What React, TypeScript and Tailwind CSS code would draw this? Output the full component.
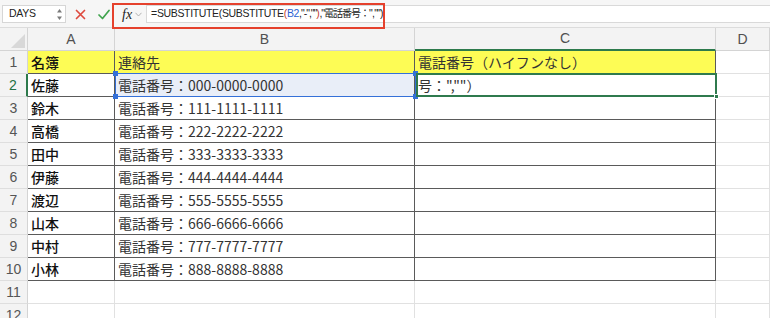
import React from "react";

const names = ["佐藤", "鈴木", "高橋", "田中", "伊藤", "渡辺", "山本", "中村", "小林"];

const jp = { fontFamily: '"Noto Sans CJK JP", "Liberation Sans", sans-serif' };

function Cell({
  w,
  dark,
  className = "",
  children,
}: {
  w: string;
  dark: boolean;
  className?: string;
  children?: React.ReactNode;
}) {
  return (
    <div
      className={`${w} flex h-full shrink-0 items-center overflow-visible whitespace-nowrap border-r border-b px-[3px] text-[14px] ${
        dark ? "border-[#5a5a5a]" : "border-[#e1e1e1]"
      } ${className}`}
    >
      {children}
    </div>
  );
}

function FormulaBar() {
  return (
    <div className="relative flex h-[27px] items-start bg-[#f6f6f6]">
      <div className="ml-[2px] mt-[5px] flex h-[18px] w-[64px] items-center justify-between border border-[#d6d6d6] bg-white pl-[6px] pr-[2px]">
        <span className="text-[10.5px] tracking-[-0.3px] text-[#222]" style={{ fontFamily: '"Liberation Sans", sans-serif' }}>
          DAYS
        </span>
        <svg width="7" height="13" viewBox="0 0 7 13">
          <path d="M3.5 1 L6 4.5 H1 Z" fill="#7a7a7a" />
          <path d="M3.5 12 L6 8.5 H1 Z" fill="#7a7a7a" />
        </svg>
      </div>
      <div className="ml-[9px] mt-[9px]">
        <svg width="11" height="11" viewBox="0 0 11 11">
          <path d="M1.5 1.5 L9.5 9.5 M9.5 1.5 L1.5 9.5" stroke="#de4a3e" strokeWidth="1.7" strokeLinecap="round" />
        </svg>
      </div>
      <div className="ml-[12px] mt-[9px]">
        <svg width="12" height="11" viewBox="0 0 12 11">
          <path d="M1 6 L4.5 9.5 L11 1.5" fill="none" stroke="#3fa34d" strokeWidth="1.7" strokeLinecap="round" strokeLinejoin="round" />
        </svg>
      </div>
      <div className="ml-[8px] mt-[5px] flex h-[18px] items-center">
        <span className="ml-[4px] text-[14px] italic text-[#222]" style={{ fontFamily: '"Liberation Serif", serif' }}>
          fx
        </span>
        <svg className="ml-[3px]" width="7" height="5" viewBox="0 0 7 5">
          <path d="M0.5 0.8 L3.5 4 L6.5 0.8" fill="none" stroke="#aaa" strokeWidth="0.9" />
        </svg>
      </div>
      <div className="ml-[4px] mt-[5px] flex h-[18px] flex-1 items-center border-y border-l border-[#d9d9d9] bg-white pl-[4px]">
        <span
          className="whitespace-nowrap text-[10.5px] tracking-[-0.35px] text-[#222]"
          style={{ fontFamily: '"Liberation Sans", "Noto Sans CJK JP", sans-serif' }}
        >
          =SUBSTITUTE(SUBSTITUTE<span className="text-[#c43a2c]">(</span>
          <span className="text-[#2a62d3]">B2</span>
          <span className="tracking-[-1px]">,"-",""</span>
          <span className="text-[#c43a2c]">)</span>
          <span className="tracking-[-1px]">,"</span>
          <span className="text-[10px] tracking-[-1px]">電話番号：</span>
          <span className="tracking-[-0.8px]">",""</span>
          <span className="border-r border-[#222] pr-[1px]">)</span>
        </span>
      </div>
      <div className="pointer-events-none absolute left-[112px] top-[3px] h-[26px] w-[273px] border-[2.5px] border-[#e5412d]" />
    </div>
  );
}

function ColumnHeader() {
  const base = "flex h-full shrink-0 items-center justify-center border-r border-b border-[#d4d4d4] bg-[#f3f3f3] text-[14px] text-[#505050]";
  return (
    <div className="flex h-[24px] border-t border-[#dcdcdc]" style={{ fontFamily: '"Liberation Sans", sans-serif' }}>
      <div className={`${base} relative w-[28px]`}>
        <svg className="absolute right-[2px] bottom-[2px]" width="14" height="14" viewBox="0 0 14 14">
          <path d="M14 0 L14 14 L0 14 Z" fill="#d8d8d8" />
        </svg>
      </div>
      <div className={`${base} w-[87px]`}>A</div>
      <div className={`${base} w-[300px]`}>B</div>
      <div className={`${base} w-[301px] border-b-2 border-b-[#2d7a4c] text-[#237044]`}>C</div>
      <div className={`${base} flex-1`}>D</div>
    </div>
  );
}

export default function App() {
  const rows = Array.from({ length: 12 }, (_, i) => i + 1);
  return (
    <div className="h-[318px] w-[770px] overflow-hidden bg-white">
      <FormulaBar />
      <ColumnHeader />
      <div className="relative" style={jp}>
        {rows.map((r) => {
          const dark = r <= 10;
          const head = r === 1;
          const yellow = head ? "bg-[#fdfc55]" : "";
          let a = "";
          let b = "";
          if (head) {
            a = "名簿";
            b = "連絡先";
          } else if (r <= 10) {
            a = names[r - 2];
            b = `電話番号：${String(r - 2).repeat(3)}-${String(r - 2).repeat(4)}-${String(r - 2).repeat(4)}`;
          }
          return (
            <div key={r} className="flex h-[23px]">
              <div
                className={`flex h-full w-[28px] shrink-0 items-center justify-center border-b border-[#dedede] bg-[#f3f3f3] text-[14px] ${
                  r === 2 ? "border-r-2 border-r-[#2d7a4c] text-[#237044]" : "border-r border-r-[#d4d4d4] text-[#555]"
                }`}
                style={{ fontFamily: '"Liberation Sans", sans-serif' }}
              >
                {r}
              </div>
              <Cell w="w-[87px]" dark={dark} className={`${yellow} font-medium text-[#111]`}>
                {a}
              </Cell>
              <Cell w="w-[300px]" dark={dark} className={`${yellow} ${r === 2 ? "bg-[#e9eef8]" : ""} text-[#333]`}>
                {b}
              </Cell>
              <Cell w="w-[301px]" dark={dark} className={`${yellow} text-[#333]`}>
                {head ? "電話番号（ハイフンなし）" : r === 2 ? '号：",""）' : ""}
              </Cell>
              <Cell w="flex-1" dark={false} />
            </div>
          );
        })}

        {/* selection of B2 */}
        <div className="pointer-events-none absolute left-[115px] top-[22px] h-[24px] w-[301px] border-[1.5px] border-[#3470d8]" />
        <div className="absolute left-[113px] top-[20px] h-[5px] w-[5px] bg-[#3470d8]" />
        <div className="absolute left-[113px] top-[43px] h-[5px] w-[5px] bg-[#3470d8]" />
        <div className="absolute left-[413px] top-[20px] h-[5px] w-[5px] bg-[#3470d8]" />
        <div className="absolute left-[413px] top-[43px] h-[5px] w-[5px] bg-[#3470d8]" />

        {/* active cell C2 */}
        <div className="pointer-events-none absolute left-[416px] top-[22px] h-[24px] w-[301px] border-2 border-[#2f7a4e]" />
        <div className="absolute left-[714px] top-[43px] h-[5px] w-[5px] border border-white bg-[#2f7a4e]" />
      </div>
    </div>
  );
}
